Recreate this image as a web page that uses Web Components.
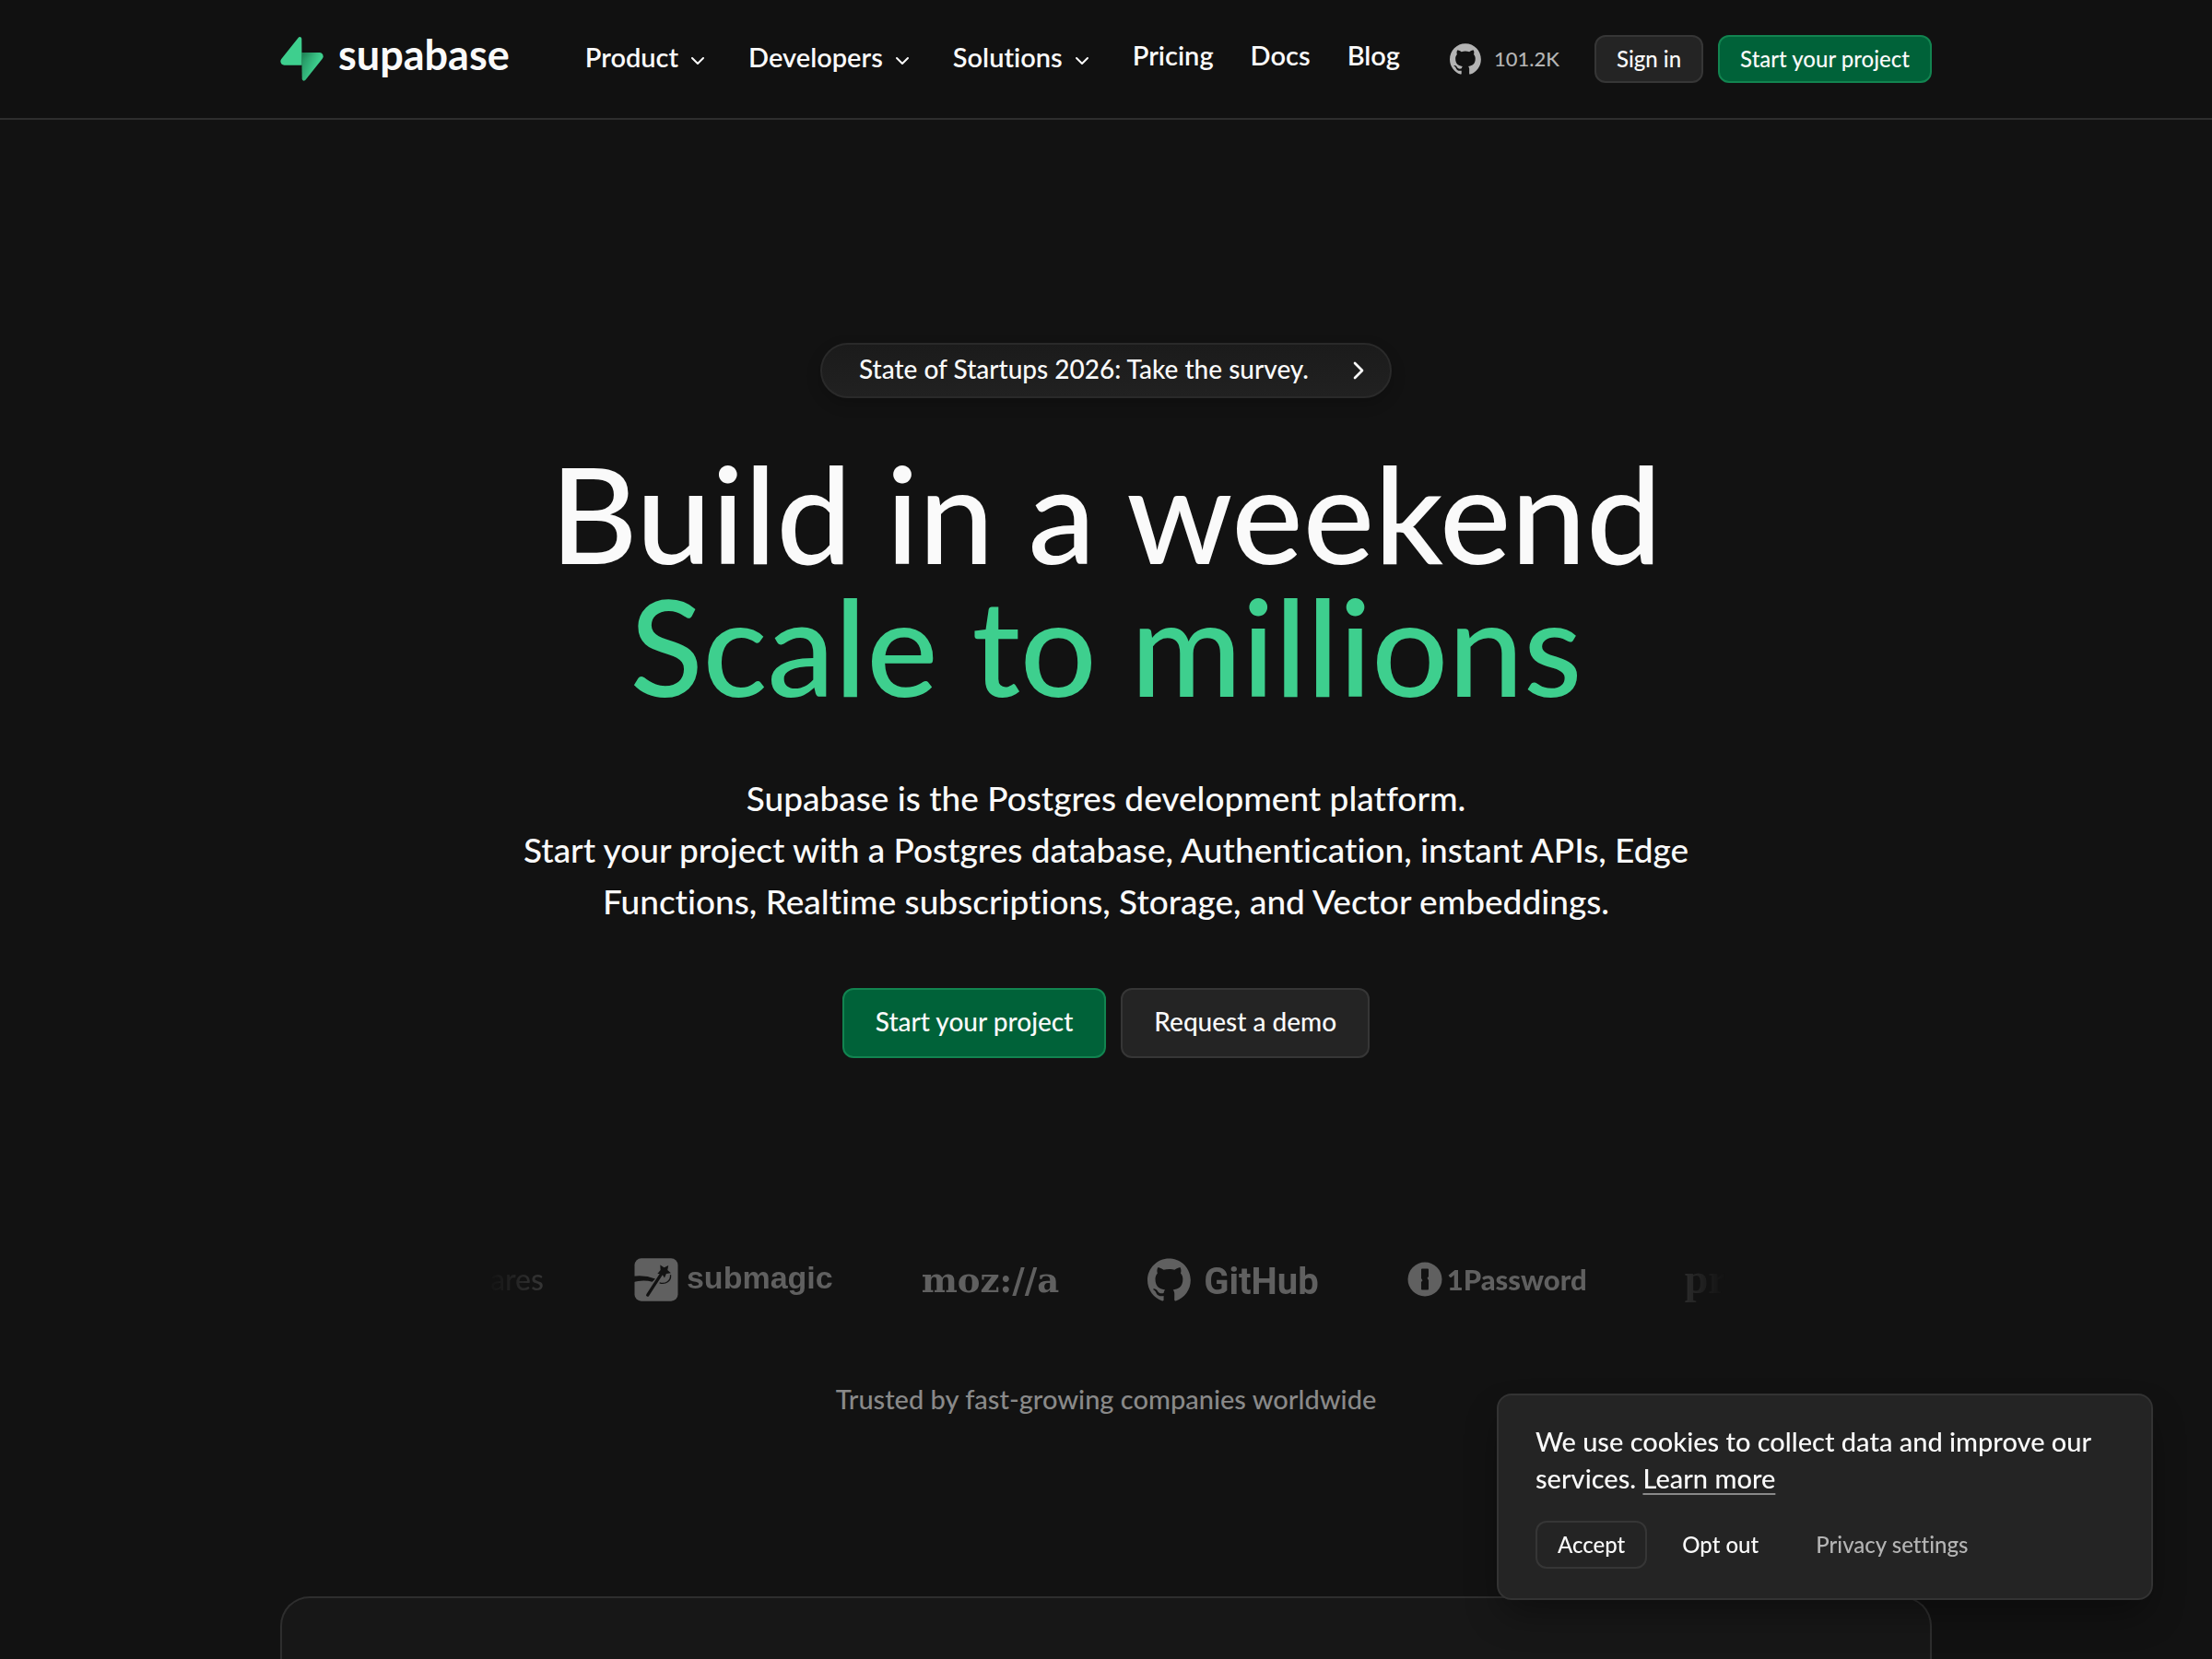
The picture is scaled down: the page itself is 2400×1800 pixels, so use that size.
<!DOCTYPE html>
<html lang="en">
<head>
<meta charset="utf-8">
<meta name="viewport" content="width=device-width, initial-scale=1">
<title>Supabase | The Postgres Development Platform.</title>
<style>
  :root {
    --bg: #121212;
    --fg: #fafafa;
    --fg-light: #b4b4b4;
    --fg-muted: #898989;
    --line: #2e2e2e;
    --brand: #3ecf8e;
    --logo: #606060;
  }
  html, body { margin: 0; height: 100%; background: var(--bg); }
  body { font-family: Lato, sans-serif; font-weight: 500; font-variant-ligatures: none; color: var(--fg); }
</style>
</head>
<body>
<home-page></home-page>

<template id="t-page">
  <style>
    :host { display: flex; flex-direction: column; height: 100vh; overflow: hidden; }
    main { flex: 1; display: flex; flex-direction: column; align-items: center; padding: 242px 64px 0; }
    section { width: 100%; max-width: 1344px; display: flex; flex-direction: column; align-items: center; }
    h1 { margin: 52px 0 66px; font-size: 146px; line-height: 144px; font-weight: 500; text-align: center; }
    h1 span { display: block; }
    h1 .accent { color: var(--brand); }
    .lead { margin: 0; font-size: 37px; line-height: 56px; text-align: center; }
    .cta { display: flex; gap: 16px; margin-top: 66px; }
    logo-strip { margin-top: 192px; width: 100%; }
    .trusted { margin: 62px 0 0; font-size: 29px; line-height: 40px; color: var(--fg-muted); }
    .panel { flex: 1; box-sizing: border-box; width: 100%; max-width: 1792px; min-height: 68px; margin-top: 194px;
      background: #171717; border: 2px solid var(--line); border-bottom: 0; border-radius: 32px 32px 0 0; }
  </style>
  <site-header></site-header>
  <main>
    <section>
      <announce-pill>State of Startups 2026: Take the survey.</announce-pill>
      <h1><span>Build in a weekend</span><span class="accent">Scale to millions</span></h1>
      <p class="lead">Supabase is the Postgres development platform.<br>Start your project with a Postgres database, Authentication, instant APIs, Edge Functions, Realtime subscriptions, Storage, and Vector embeddings.</p>
      <div class="cta">
        <ui-button kind="primary" size="large">Start your project</ui-button>
        <ui-button kind="default" size="large">Request a demo</ui-button>
      </div>
      <logo-strip></logo-strip>
      <p class="trusted">Trusted by fast-growing companies worldwide</p>
    </section>
    <div class="panel"></div>
  </main>
  <cookie-notice></cookie-notice>
</template>

<template id="t-header">
  <style>
    :host { display: block; border-bottom: 2px solid var(--line); background: #111111; }
    .bar { box-sizing: border-box; height: 128px; max-width: 1920px; margin: 0 auto; padding: 0 64px; display: flex; align-items: center; }
    .brand { display: flex; align-items: center; gap: 16px; color: var(--fg); text-decoration: none; }
    .brand svg { display: block; width: 47px; height: 48px; }
    .brand span { font-size: 45px; line-height: 48px; font-weight: 700; padding-bottom: 10px; }
    nav { display: flex; align-items: center; gap: 43px; margin-left: 82px; padding-bottom: 5px; }
    .links { display: flex; gap: 40px; }
    nav a { color: var(--fg); font-size: 29px; line-height: 36px; font-weight: 600; text-decoration: none; padding-bottom: 4px; }
    .right { margin-left: auto; display: flex; align-items: center; gap: 16px; }
    .stars { display: flex; align-items: center; gap: 14px; margin-right: 22px; color: var(--fg-light); font-size: 22px; line-height: 32px; font-weight: 500; text-decoration: none; }
    .stars github-mark { width: 34px; height: 34px; }
  </style>
  <header class="bar">
    <a class="brand" href="#">
      <svg viewBox="0 0 109 113" fill="none" aria-hidden="true">
        <defs>
          <linearGradient id="g1" x1="53.97" y1="54.97" x2="94.16" y2="71.83" gradientUnits="userSpaceOnUse"><stop stop-color="#249361"/><stop offset="1" stop-color="#3ecf8e"/></linearGradient>
          <linearGradient id="g2" x1="36.16" y1="30.58" x2="54.48" y2="65.08" gradientUnits="userSpaceOnUse"><stop/><stop offset="1" stop-opacity="0"/></linearGradient>
        </defs>
        <path d="M63.7076 110.284C60.8481 113.885 55.0502 111.912 54.9813 107.314L53.9738 40.0627H99.1935C107.384 40.0627 111.952 49.5228 106.859 55.9374L63.7076 110.284Z" fill="url(#g1)"/>
        <path d="M63.7076 110.284C60.8481 113.885 55.0502 111.912 54.9813 107.314L53.9738 40.0627H99.1935C107.384 40.0627 111.952 49.5228 106.859 55.9374L63.7076 110.284Z" fill="url(#g2)" fill-opacity=".2"/>
        <path d="M45.317 2.07103C48.1765 -1.53037 53.9745 .442937 54.0434 5.041L54.4849 72.2922H9.83113C1.64038 72.2922 -2.92775 62.8321 2.1655 56.4175L45.317 2.07103Z" fill="#3ecf8e"/>
      </svg>
      <span>supabase</span>
    </a>
    <nav>
      <nav-trigger>Product</nav-trigger>
      <nav-trigger>Developers</nav-trigger>
      <nav-trigger>Solutions</nav-trigger>
      <div class="links">
        <a href="#">Pricing</a>
        <a href="#">Docs</a>
        <a href="#">Blog</a>
      </div>
    </nav>
    <div class="right">
      <a class="stars" href="#"><github-mark></github-mark><span>101.2K</span></a>
      <ui-button kind="default">Sign in</ui-button>
      <ui-button kind="primary">Start your project</ui-button>
    </div>
  </header>
</template>

<template id="t-trigger">
  <style>
    :host { display: block; }
    button { display: flex; align-items: center; gap: 9px; margin: 0; padding: 0; border: 0; background: none; color: var(--fg); font: inherit; font-variant-ligatures: none; font-size: 29px; line-height: 36px; font-weight: 600; cursor: pointer; }
    svg { display: block; width: 24px; height: 24px; padding-top: 8px; }
  </style>
  <button type="button"><slot></slot><svg viewBox="0 0 24 24" fill="none" stroke="currentColor" stroke-width="2" stroke-linecap="round" stroke-linejoin="round" aria-hidden="true"><path d="m6 9 6 6 6-6"/></svg></button>
</template>

<template id="t-button">
  <style>
    :host { display: block; }
    button { display: block; box-sizing: border-box; margin: 0; height: 52px; padding: 0 22px; border: 2px solid #363636; border-radius: 12px; background: #242424; color: var(--fg); font: inherit; font-variant-ligatures: none; font-size: 24px; line-height: 32px; cursor: pointer; white-space: nowrap; }
    :host([size="large"]) button { height: 76px; padding: 0 34px 4px; font-size: 28px; }
    :host([kind="primary"]) button { background: #006239; border-color: #128450; }
    :host([kind="text"]) button { background: none; border-color: transparent; }
    :host([tone="light"]) button { color: var(--fg-light); }
  </style>
  <button type="button"><slot></slot></button>
</template>

<template id="t-pill">
  <style>
    :host { display: block; }
    a { box-sizing: border-box; display: flex; align-items: center; gap: 38px; height: 60px; padding: 0 18px 0 40px; border: 2px solid #2a2a2a; border-radius: 30px; background: linear-gradient(#1b1b1b, #212121); box-shadow: 0 6px 16px #0003; color: var(--fg); font-size: 28px; line-height: 36px; text-decoration: none; }
    span { padding-bottom: 4px; }
    svg { display: block; width: 32px; height: 32px; }
  </style>
  <a href="#"><span><slot></slot></span><svg viewBox="0 0 24 24" fill="none" stroke="currentColor" stroke-width="2" stroke-linecap="round" stroke-linejoin="round" aria-hidden="true"><path d="m9 18 6-6-6-6"/></svg></a>
</template>

<template id="t-github">
  <style>:host { display: block; } svg { display: block; width: 100%; height: 100%; }</style>
  <svg viewBox="0 0 98 96" fill="currentColor" aria-hidden="true"><path fill-rule="evenodd" d="M48.854 0C21.839 0 0 22 0 49.217c0 21.756 13.993 40.172 33.405 46.69 2.427.49 3.316-1.059 3.316-2.362 0-1.141-.08-5.052-.08-9.127-13.59 2.934-16.42-5.867-16.42-5.867-2.184-5.704-5.42-7.17-5.42-7.17-4.448-3.015.324-3.015.324-3.015 4.934.326 7.523 5.052 7.523 5.052 4.367 7.496 11.404 5.378 14.235 4.074.404-3.178 1.699-5.378 3.074-6.6-10.839-1.141-22.243-5.378-22.243-24.283 0-5.378 1.94-9.778 5.014-13.2-.485-1.222-2.184-6.275.486-13.038 0 0 4.125-1.304 13.426 5.052a46.97 46.97 0 0 1 12.214-1.63c4.125 0 8.33.571 12.213 1.63 9.302-6.356 13.427-5.052 13.427-5.052 2.67 6.763.97 11.816.485 13.038 3.155 3.422 5.015 7.822 5.015 13.2 0 18.905-11.404 23.06-22.324 24.283 1.78 1.548 3.316 4.481 3.316 9.126 0 6.6-.08 11.897-.08 13.526 0 1.304.89 2.853 3.316 2.364 19.412-6.52 33.405-24.935 33.405-46.691C97.707 22 75.788 0 48.854 0z"/></svg>
</template>

<template id="t-strip">
  <style>
    :host { display: block; overflow: hidden; color: var(--logo);
      -webkit-mask-image: linear-gradient(90deg, transparent, #000 134px, #000 calc(100% - 134px), transparent);
      mask-image: linear-gradient(90deg, transparent, #000 134px, #000 calc(100% - 134px), transparent); }
    ul { display: flex; align-items: center; gap: 96px; height: 96px; margin: 0; padding: 0 0 0 4px; list-style: none; }
    li { display: flex; align-items: center; flex: none; white-space: nowrap; }
    svg { display: block; flex: none; }
    .ares { font-size: 32px; line-height: 40px; }
    .submagic { gap: 9px; font: 700 34px/40px "Liberation Sans", sans-serif; }
    .submagic span { padding-bottom: 5px; }
    .submagic svg { width: 50px; height: 47px; }
    .mozilla { font: 700 37px/40px "DejaVu Serif", serif; padding-top: 2px; }
    .github { gap: 14px; font: 700 40px/40px Roboto, sans-serif; }
    .github span { padding-top: 5px; }
    .github github-mark { width: 47px; height: 47px; }
    .onepass { gap: 5px; font-size: 31px; line-height: 40px; font-weight: 900; }
    .onepass svg { width: 38px; height: 38px; }
    .pr { padding-left: 10px; font: 700 46px/40px "Liberation Serif", serif; }
  </style>
  <ul>
    <li class="ares">ares</li>
    <li class="submagic">
      <svg viewBox="21 28 150 142" aria-hidden="true">
        <rect x="28" y="29" width="142" height="140" rx="22" fill="currentColor"/>
        <path d="M21 107Q58 98 86 106L96 96Q60 82 21 88Z" fill="#121212"/>
        <path d="M71 149 116 80" fill="none" stroke="#121212" stroke-width="10" stroke-linecap="round"/>
        <path d="m112 51 13 8 14-7-3 15 11 10-15 2-6 14-8-13-15-1 10-12z" fill="#121212"/>
        <path d="M110 109c20 6 38-6 36-26" fill="none" stroke="#121212" stroke-width="4"/>
      </svg>
      <span>submagic</span>
    </li>
    <li class="mozilla">moz://a</li>
    <li class="github"><github-mark></github-mark><span>GitHub</span></li>
    <li class="onepass">
      <svg viewBox="0 0 38 38" aria-hidden="true">
        <circle cx="19" cy="19" r="18.5" fill="currentColor"/>
        <path d="M16 7.5h6q1 0 1 1V16l-1.500 1.800L23 20v9.500q0 1-1 1h-6q-1 0-1-1V22l1.500-1.800L15 18V8.500q0-1 1-1z" fill="#121212"/>
      </svg>
      <span>1Password</span>
    </li>
    <li class="pr">pr</li>
  </ul>
</template>

<template id="t-cookie">
  <style>
    :host { position: fixed; right: 64px; bottom: 64px; box-sizing: border-box; width: 712px; max-width: calc(100% - 128px); padding: 30px 40px 32px; background: #242424; border: 2px solid #333333; border-radius: 16px; box-shadow: 0 20px 40px -8px #0006; }
    p { margin: 0; font-size: 29px; line-height: 40px; }
    a { color: inherit; text-decoration: underline; text-decoration-color: #898989; text-decoration-thickness: 2px; text-underline-offset: 5px; }
    .actions { display: flex; gap: 14px; margin-top: 26px; }
  </style>
  <p>We use cookies to collect data and improve our services. <a href="#">Learn more</a></p>
  <div class="actions">
    <ui-button>Accept</ui-button>
    <ui-button kind="text">Opt out</ui-button>
    <ui-button kind="text" tone="light">Privacy settings</ui-button>
  </div>
</template>

<script>
  const define = (name, id) => customElements.define(name, class extends HTMLElement {
    constructor() {
      super();
      this.attachShadow({ mode: 'open' }).append(document.getElementById(id).content.cloneNode(true));
    }
  });
  define('github-mark', 't-github');
  define('ui-button', 't-button');
  define('nav-trigger', 't-trigger');
  define('announce-pill', 't-pill');
  define('logo-strip', 't-strip');
  define('cookie-notice', 't-cookie');
  define('site-header', 't-header');
  define('home-page', 't-page');
</script>
</body>
</html>
